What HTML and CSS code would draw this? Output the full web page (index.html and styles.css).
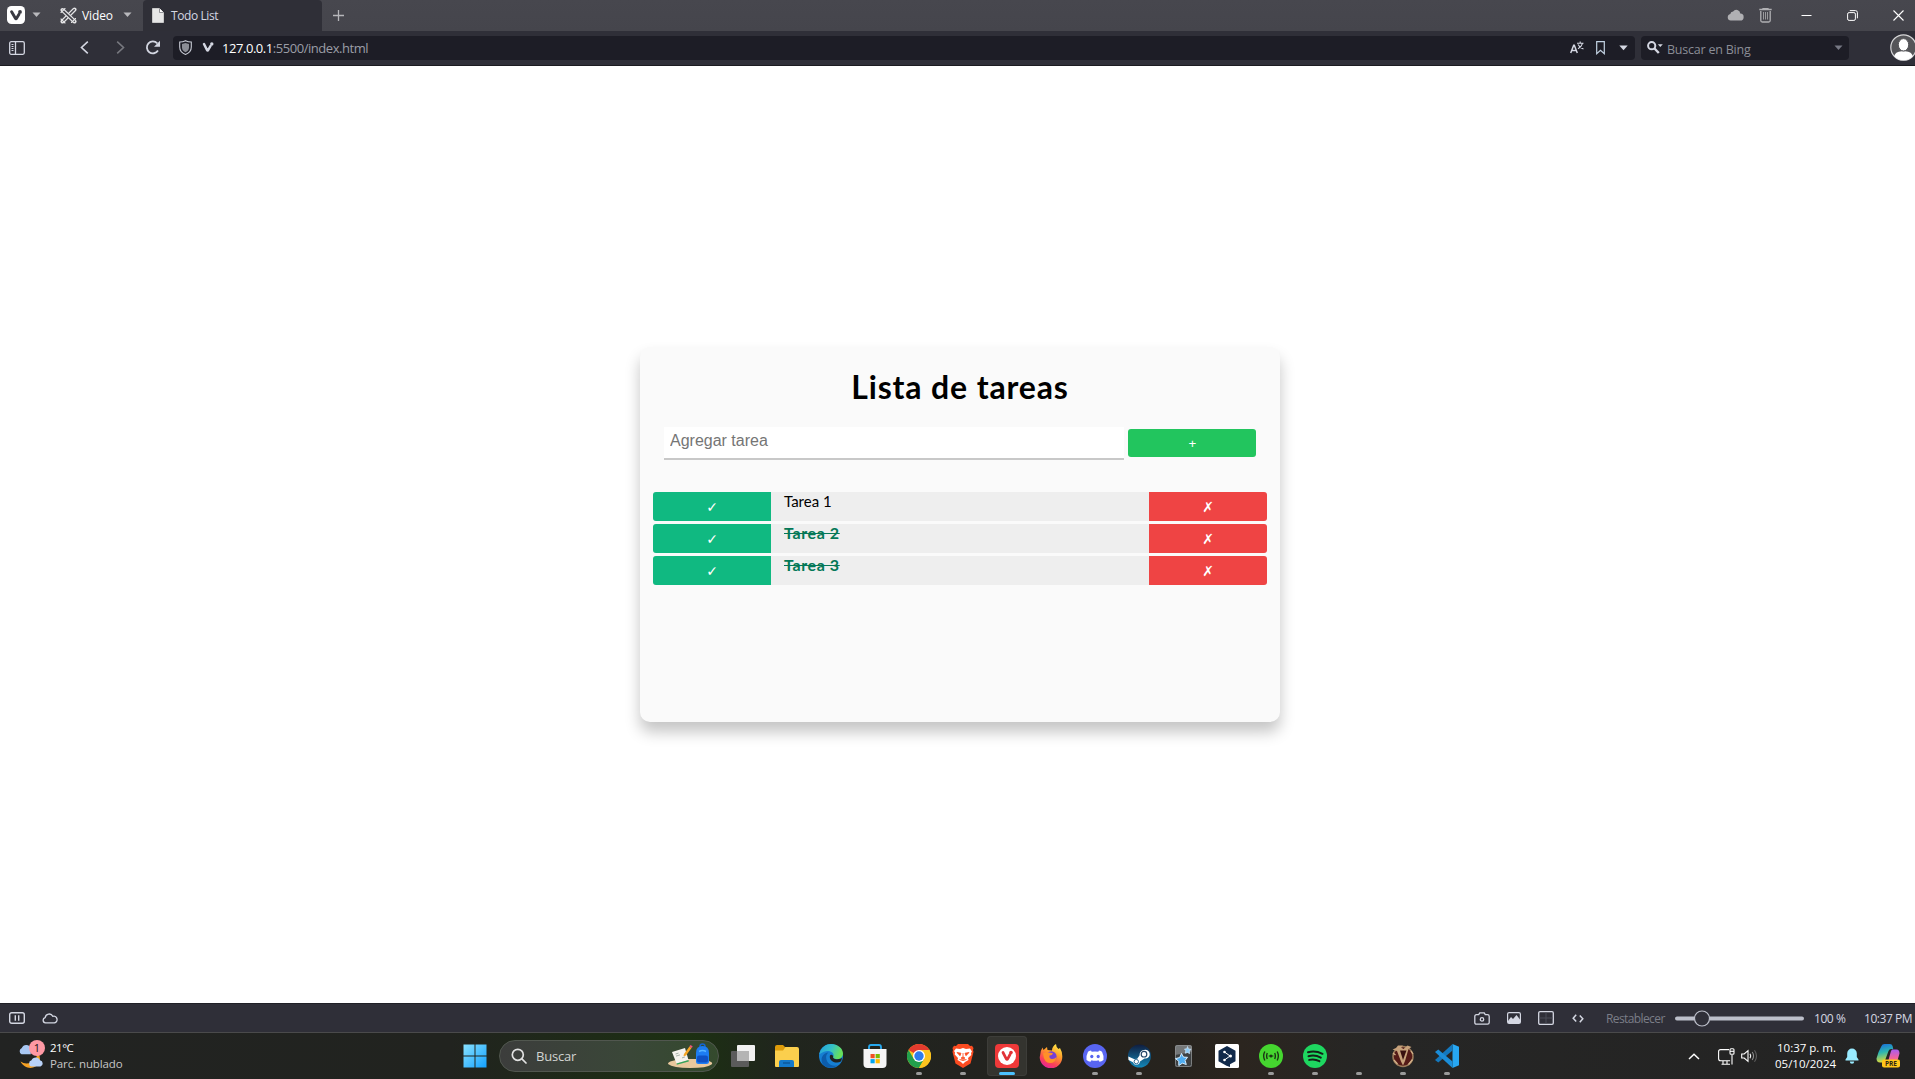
FILE: index.html
```html
<!DOCTYPE html>
<html lang="es">
<head>
<meta charset="utf-8">
<title>Todo List</title>
<link rel="stylesheet" href="styles.css">
</head>
<body>
<div class="desktop">
  <header class="tabbar">
    <div class="tabbar-left">
      <svg width="18" height="18" viewBox="0 0 18 18"><rect width="18" height="18" rx="4.5" fill="#fff"/><path d="M4.600 5.800 8.400 12.300Q9 13.300 9.600 12.300L12 8.200" fill="none" stroke="#3a3a42" stroke-width="2.900" stroke-linecap="round" stroke-linejoin="round"/><circle cx="13" cy="5.900" r="1.900" fill="#3a3a42"/></svg>
      <svg width="9" height="6" viewBox="0 0 9 6"><path d="M.5.500h8L4.500 5z" fill="#b9b9bd"/></svg>
      <svg width="17" height="17" viewBox="0 0 17 17" fill="none" stroke-linecap="round"><path d="M2.500 14.500 14.500 2.500" stroke="#e4e4e6" stroke-width="4"/><path d="M2.800 14.200 14.200 2.800" stroke="#45454c" stroke-width="1.600"/><path d="m2.500 3 12 11.500" stroke="#e4e4e6" stroke-width="4"/><path d="m2.800 3.300 11.400 10.900" stroke="#45454c" stroke-width="1.600"/><path d="m1 5.500 4-4M11.500 15.500l4-4M1 12l4 4" stroke="#e4e4e6" stroke-width="1.100"/></svg>
      <span class="workspace">Video</span>
      <svg width="9" height="6" viewBox="0 0 9 6"><path d="M.5.500h8L4.500 5z" fill="#b9b9bd"/></svg>
    </div>
    <div class="tab">
      <svg width="12" height="15" viewBox="0 0 12 15"><path d="M.5.500h7l4 4v10H.5z" fill="#e6e6e6" stroke="#c9c9c9"/><path d="M7.500.500v4h4" fill="#fff" stroke="#77777c" stroke-width=".8"/></svg>
      <span>Todo List</span>
    </div>
    <svg class="newtab" width="11" height="11" viewBox="0 0 11 11"><path d="M5.500 0v11M0 5.500h11" stroke="#b6b6ba" stroke-width="1.300"/></svg>
    <div class="winbuttons">
      <svg width="17" height="12" viewBox="0 0 17 12"><path d="M3.700 11.500a3.300 3.300 0 0 1-.4-6.500 2.800 2.800 0 0 1 2.800-2.500A4 4 0 0 1 13.300 4.500 3.500 3.500 0 0 1 13 11.500z" fill="#b0b0b3"/></svg>
      <svg width="13" height="15" viewBox="0 0 13 15" fill="none" stroke="#b0b0b3"><path d="M.3 1.500h12.400M4 1V.5h5V1M1.800 3v9.500q0 1.500 1.500 1.500h6.400q1.500 0 1.500-1.500V3" stroke-width="1.300"/><path d="M4.500 4v7.500M6.500 4v7.500M8.500 4v7.500" stroke-width=".8"/></svg>
      <svg width="11" height="11" viewBox="0 0 11 11"><path d="M.5 5.500h10" stroke="#fff"/></svg>
      <svg width="11" height="11" viewBox="0 0 11 11" fill="none" stroke="#fff"><rect x=".6" y="2.600" width="7.800" height="7.800" rx="1.500"/><path d="M2.800.6H8.400q2 0 2 2V8.300"/></svg>
      <svg width="11" height="11" viewBox="0 0 11 11"><path d="m.5.500 10 10m0-10-10 10" stroke="#fff" stroke-width="1.100"/></svg>
    </div>
  </header>

  <nav class="toolbar">
    <div class="navicons">
      <svg width="16" height="14" viewBox="0 0 16 14" fill="none" stroke="#d4d7e2"><rect x=".7" y=".7" width="14.600" height="12.600" rx="1.500" stroke-width="1.300"/><path d="M6.500.500v13" stroke-width="1.300"/><path d="M2.500 3.500h2m-2 2h2m-2 2h2m-2 2h2"/></svg>
      <svg width="9" height="13" viewBox="0 0 9 13"><path d="M7.800.7 1.500 6.500l6.300 5.800" fill="none" stroke="#d4d7e2" stroke-width="1.600"/></svg>
      <svg width="9" height="13" viewBox="0 0 9 13"><path d="m1.200.7 6.300 5.800-6.300 5.800" fill="none" stroke="#77787f" stroke-width="1.600"/></svg>
      <svg width="16" height="15" viewBox="0 0 16 15"><path d="M12.300 3.300A6 6 0 1 0 13 10.500" fill="none" stroke="#d4d7e2" stroke-width="1.800"/><path d="M15 .8v6H9z" fill="#d4d7e2"/></svg>
    </div>
    <div class="urlfield">
      <svg width="13" height="15" viewBox="0 0 13 15"><path d="M6.500.7C4.500 1.700 2.500 2 .7 2v5c0 4 2.800 6.300 5.800 7.400C9.500 13.300 12.300 11 12.300 7V2C10.500 2 8.500 1.700 6.500.7z" fill="none" stroke="#c7cad4" stroke-width="1.100"/><path d="M6.500 3 3 4v3.500c0 2.500 1.700 3.800 3.500 4.700C8.300 11.300 10 10 10 7.500V4z" fill="#8b8d95"/></svg>
      <svg width="12" height="11" viewBox="0 0 12 11"><path d="M2 2 5 8q.6 1.200 1.200 0L8.500 4" fill="none" stroke="#d4d7e2" stroke-width="2.500" stroke-linecap="round"/><circle cx="9.800" cy="2" r="1.700" fill="#d4d7e2"/></svg>
      <span class="url"><b>127.0.0.1</b><i>:5500/index.html</i></span>
      <svg width="14" height="13" viewBox="0 0 14 13" fill="none" stroke="#d4d7e2"><path d="m.7 12 3-7.700h.6L7.300 12M1.800 9.500h4.400" stroke-width="1.500"/><path d="M7 2.200h6.500M10.200.5v1.700M12.500 2.400C11.800 4.800 10.500 6.500 8 7.800M8 3.500c1 2 2.500 3.500 5.500 4.500" stroke-width="1.100"/></svg>
      <svg width="9" height="14" viewBox="0 0 9 14"><path d="M.7.700h7.600v12L4.500 9.300.7 12.700z" fill="none" stroke="#c2d2e2" stroke-width="1.200"/></svg>
      <svg width="9" height="6" viewBox="0 0 9 6"><path d="M.3.500h8.400L4.500 5.200z" fill="#d4d7e2"/></svg>
    </div>
    <div class="searchfield">
      <svg width="16" height="13" viewBox="0 0 16 13"><circle cx="4.700" cy="4.700" r="3.600" fill="none" stroke="#d4d7e2" stroke-width="2"/><path d="m7.500 7.500 4.300 4.500" stroke="#d4d7e2" stroke-width="2.400"/><path d="M10.800 3.200h5L13.300 6z" fill="#d4d7e2"/></svg>
      <span>Buscar en Bing</span>
      <svg width="9" height="6" viewBox="0 0 9 6"><path d="M.5.500h8L4.500 5z" fill="#777984"/></svg>
    </div>
    <svg class="avatar" width="27" height="27" viewBox="0 0 27 27"><circle cx="13.500" cy="13.500" r="12.700" fill="#555559" stroke="#d6d6d8" stroke-width="1.200"/><path d="M4.300 22.200c1-4.200 4.500-5 9.200-5s8.200.8 9.200 5a12.300 12.300 0 0 1-18.400 0z" fill="#fff"/><ellipse cx="13.500" cy="10.800" rx="5.200" ry="6.200" fill="#fff" stroke="#555559"/></svg>
  </nav>

  <main class="viewport">
    <section class="card">
      <h1>Lista de tareas</h1>
      <form class="newtask">
        <input type="text" placeholder="Agregar tarea">
        <button type="button">+</button>
      </form>
      <ul class="tasks">
        <li><button type="button" class="done">✓</button><span>Tarea 1</span><button type="button" class="remove">✗</button></li>
        <li class="completed"><button type="button" class="done">✓</button><span>Tarea 2</span><button type="button" class="remove">✗</button></li>
        <li class="completed"><button type="button" class="done">✓</button><span>Tarea 3</span><button type="button" class="remove">✗</button></li>
      </ul>
    </section>
  </main>

  <footer class="statusbar">
    <svg width="16" height="12" viewBox="0 0 16 12" fill="none" stroke="#d4d7e2" stroke-width="1.400"><rect x=".7" y=".7" width="14.600" height="10.600" rx="2"/><path d="M6.300 3.300v5.400M9.700 3.300v5.400"/></svg>
    <svg width="16" height="11" viewBox="0 0 16 11"><path d="M3.500 9.900a2.700 2.700 0 0 1-.3-5.300A4 4 0 0 1 10.800 3.300 3.400 3.400 0 1 1 12.500 9.900z" fill="none" stroke="#d4d7e2" stroke-width="1.300"/></svg>
    <svg width="16" height="13" viewBox="0 0 16 13" fill="none" stroke="#d4d7e2" stroke-width="1.300"><path d="M2.500 2.700h2.200L5.800.8h4.400l1.100 1.900h2.200q1.700 0 1.700 1.700v6q0 1.700-1.700 1.700h-11Q.8 12.100.8 10.400v-6q0-1.700 1.700-1.700z"/><circle cx="8" cy="7.400" r="1.700"/></svg>
    <svg width="14" height="12" viewBox="0 0 14 12"><rect x=".6" y=".6" width="12.800" height="10.800" rx="1.500" fill="none" stroke="#d4d7e2" stroke-width="1.200"/><path d="m1 9 3-4 2 2 3.500-4L13 7.500V11H1z" fill="#d4d7e2"/></svg>
    <svg width="16" height="14" viewBox="0 0 16 14" fill="none"><rect x=".7" y=".7" width="14.600" height="12.600" rx="1.300" stroke="#d4d7e2" stroke-width="1.300"/><path d="M8 1.500v11M1.500 7h13" stroke="#4b4c56"/></svg>
    <svg width="12" height="9" viewBox="0 0 12 9" fill="none" stroke="#d4d7e2" stroke-width="1.500"><path d="M4.200.8 1.200 4.200l3 3.200M7.800 1.600l3 3.200-3 3.400"/></svg>
    <span class="reset">Restablecer</span>
    <svg width="130" height="17" viewBox="0 0 130 17"><path d="M2 8.500h18M35 8.500h92" stroke="#bcbfca" stroke-width="4" stroke-linecap="round"/><circle cx="27" cy="8.500" r="7.500" fill="#2f2f38" stroke="#bcbfca" stroke-width="1.200"/></svg>
    <span class="zoom">100 %</span>
    <span class="clock">10:37 PM</span>
  </footer>

  <div class="taskbar">
    <div class="weather">
      <svg width="28" height="30" viewBox="0 0 28 30"><path d="M19.500 12a11 11 0 0 1-17 9.500c3 6 10 8 15 5s6-9 2-14.500z" fill="#f5a124"/><path d="M3.500 14.300a3.500 3.500 0 0 1 .3-6.300 4.800 4.800 0 0 1 9 .5v5.800z" fill="#a9c8f3"/><path d="M13.500 26.500a3.200 3.200 0 0 1 0-6.200 4.600 4.600 0 0 1 8.500 0 3.200 3.200 0 0 1 .5 6.200z" fill="#b9d2f7"/><circle cx="19" cy="8" r="8" fill="#ff99a4"/><text x="19" y="12" text-anchor="middle" class="badge">1</text></svg>
      <p><strong>21°C</strong><span>Parc. nublado</span></p>
    </div>
    <svg class="start" width="24" height="24" viewBox="0 0 24 24"><defs><linearGradient id="win" x1="0" y1="0" x2="24" y2="24" gradientUnits="userSpaceOnUse"><stop stop-color="#8be3ff"/><stop offset="1" stop-color="#109fff"/></linearGradient></defs><path d="M.5.500h11v11H.5zM12.500.500h11v11h-11zM.5 12.500h11v11H.5zM12.500 12.500h11v11h-11z" fill="url(#win)"/></svg>
    <div class="find">
      <svg width="16" height="16" viewBox="0 0 16 16" fill="none" stroke="#e2e2e2" stroke-width="1.700"><circle cx="6.800" cy="6.800" r="5.500"/><path d="m10.900 10.900 4.100 4.100" stroke-linecap="round"/></svg>
      <span>Buscar</span>
      <svg width="46" height="26" viewBox="0 0 46 26"><path d="M1 21q0-2 4-3l8-2h25l6 3q2 1 .5 2.500Q40 25 23 25T1 21z" fill="#e9c89d"/><path d="m5 9 13-4 3.500 12-12 3.500z" fill="#f5f3ee"/><path d="m9.500 20.500 12-3.500.3 1.500-12 3.300z" fill="#35a35c"/><path d="m8.500 11 3-.9m-2.500 3 4-1.200m2 3 3-1" stroke="#a7b2aa"/><path d="m17 11 5.500-7.500 2 1.500-5.500 7.500-2.500.7z" fill="#f5a524"/><path d="m22.300 3.300 1.400-1.400 2 1.500-1 1.500z" fill="#f0547a"/><rect x="33" y="1" width="5" height="5" rx="2.500" fill="none" stroke="#1464d1" stroke-width="1.500"/><path d="M29 18.500V10q0-7 6.500-7T42 10v8.500q0 2.500-2.500 2.500h-8Q29 21 29 18.500z" fill="#1d7df2"/><rect x="30" y="12.500" width="11" height="7" rx="2" fill="#0e51c4"/><path d="M32 8.500q3.500-2 7 0" stroke="#56b4ff" fill="none" stroke-width="1.500"/></svg>
    </div>
    <ul class="apps">
      <li><svg viewBox="0 0 24 24"><rect x="6" y="1" width="18" height="16" rx="1" fill="#f1f1f1"/><rect y="7" width="18" height="16" rx="1" fill="#5b5b5b"/><path d="M6 7h12v10H6z" fill="#b4b4b4"/></svg></li>
      <li><svg viewBox="0 0 24 24"><path d="M0 3q0-2 2-2h6l2 2h10v6H0z" fill="#dd9b0a"/><path d="M0 6.500h8L10.500 3H22q2 0 2 2v17q0 1-1 1H1q-1 0-1-1z" fill="#fbcf4d"/><path d="M4 23v-5q0-2 2-2h11q2 0 2 2v5z" fill="#1479cb"/><path d="M8 19h7" stroke="#0b5394" stroke-width="1.300"/></svg></li>
      <li><svg viewBox="0 0 24 24"><defs><linearGradient id="eg" x1="0" x2="1" y1="0" y2=".3"><stop stop-color="#219fdf"/><stop offset=".55" stop-color="#35c1c7"/><stop offset="1" stop-color="#67e05a"/></linearGradient></defs><circle cx="12" cy="12" r="12" fill="#167fd2"/><path d="M.3 10C2 3 7 0 12 0c7 0 12 4.500 12 9.500 0 3.500-2.500 5.500-5.500 5.500-4 0-5-1.600-4-3 1-4-6-8-13.700-2z" fill="url(#eg)"/><path d="M9.500 8.500C5 12 7.500 19 12 21c4 1.800 8 .5 10.300-3C17 24.500 9 25.500 4.500 21 .5 16.500 3 9 9.500 8.500z" fill="#0c5cab"/><path d="M14.300 12c-1 1.700.5 3.300 4 3.300 2.500 0 4-1 4.700-1.500-.3 2-.6 3-1.200 3.800-4 2.500-11 .2-11-4.600 0-2 1.300-3.200 3.500-1z" fill="#20221f"/></svg></li>
      <li><svg viewBox="0 0 24 24"><path d="M6 6V3q0-2 2-2h8q2 0 2 2v3" fill="none" stroke="#27a9ef" stroke-width="1.800"/><path d="M.5 5h23v15q0 4-4 4h-15q-4 0-4-4z" fill="#f5f5f5"/><path d="M7.500 10H11.700v4.200H7.500z" fill="#f25022"/><path d="M12.600 10h4.200v4.200h-4.200z" fill="#7fba00"/><path d="M7.500 15.100h4.200v4.200H7.500z" fill="#00a4ef"/><path d="M12.600 15.100h4.200v4.200h-4.200z" fill="#ffb900"/></svg></li>
      <li class="running"><svg viewBox="0 0 24 24"><circle cx="12" cy="12" r="12" fill="#fcc31e"/><path d="M12 12 1.600 6A12 12 0 0 1 22.400 6H12z" fill="#e33b2e"/><path d="M1.600 6A12 12 0 0 0 12 24l5.200-9L12 12 6.800 15z" fill="#22a04c"/><path d="M12 6h10.400A12 12 0 0 1 12 24l5.200-9z" fill="#fcc31e"/><circle cx="12" cy="12" r="6" fill="#fff"/><circle cx="12" cy="12" r="4.700" fill="#2f7ced"/></svg></li>
      <li class="running"><svg viewBox="0 0 24 24"><path d="M7 0h10l2 2 2-.2L22.500 4 22 6l.5 2-3 11.500L12 24l-7.500-4.500L1.500 8 2 6l-.5-2L3 1.800 5 2z" fill="#fb4b20"/><path d="M5 4.500 9 5l3-1 3 1 4-.5 2 3-1 1.500.3 2L17 14l.5 2-3.500 2-2 2-2-2-3.500-2L7 14l-3.300-3.500L4 8.500 3 7z" fill="#fff"/><path d="m6 8.500 4 .7-1 2.500zM18 8.500l-4 .7 1 2.500zM12 9v4l-2 1 2 1 2-1-2-1M8.500 15.500l3.500 1 3.500-1" fill="#fb4b20" stroke="#fb4b20" stroke-width=".8"/></svg></li>
      <li class="running active"><svg viewBox="0 0 24 24"><rect width="24" height="24" rx="4" fill="#ef3939"/><circle cx="12" cy="12" r="9" fill="#fff"/><path d="m8 8.500 3.300 6.300q.7 1.300 1.400 0L15 10.500" fill="none" stroke="#e23237" stroke-width="2.700" stroke-linecap="round"/><circle cx="16" cy="8.600" r="1.800" fill="#e23237"/></svg></li>
      <li><svg viewBox="0 0 24 24"><defs><linearGradient id="ff" x1=".8" y1="0" x2=".3" y2="1"><stop stop-color="#fff04a"/><stop offset=".4" stop-color="#ff9a2a"/><stop offset=".75" stop-color="#fb4058"/><stop offset="1" stop-color="#e3239d"/></linearGradient></defs><path d="M1 12Q1 7 3.500 3.500l1 2.500L8 3l.5 3 4.500.5Q13 2.500 17 0q0 3 2.500 5l1.500-1Q23.500 8 23.300 13A11.300 11.300 0 0 1 .7 13z" fill="url(#ff)"/><circle cx="12.300" cy="12.500" r="5.300" fill="#7640d6"/><path d="M4 9.500q3-2.500 6-1l4 .7q-.5 2.300-3.500 2.300-.5 3 2 3.500 3 .5 5-2-1 6-6.500 6-6 0-7-9.500z" fill="#ff9029"/></svg></li>
      <li class="running"><svg viewBox="0 0 24 24"><circle cx="12" cy="12" r="12" fill="#5865f2"/><path d="M8 6.500q-2 .3-3 1.200Q3 11.500 3.500 16q2 1.500 4 1.800l1-1.500q3.500 1 7 0l1 1.500q2-.3 4-1.800.5-4.500-1.500-8.300-1-.9-3-1.200l-.7 1.200q-3.300-.5-6.600 0z" fill="#fff"/><ellipse cx="8.800" cy="12.500" rx="1.600" ry="1.800" fill="#5865f2"/><ellipse cx="15.200" cy="12.500" rx="1.600" ry="1.800" fill="#5865f2"/></svg></li>
      <li class="running"><svg viewBox="0 0 24 24"><defs><linearGradient id="st" x2="0" y2="1"><stop stop-color="#101d3e"/><stop offset="1" stop-color="#1387b8"/></linearGradient></defs><circle cx="12.500" cy="12" r="11.500" fill="url(#st)"/><path d="m1.300 12.500 6.200 2.700q1.500-.6 2.500-.2l2.500-3.500q0-5 4.500-5.500a4.400 4.400 0 1 1 .5 8.500L13 17.500q-.5 3.300-3.700 3.300-2.600 0-3.300-2.600L1.500 16z" fill="#fff"/><circle cx="17" cy="10.200" r="2.800" fill="#fff" stroke="#244466" stroke-width="1.200"/><circle cx="9.300" cy="17.600" r="2.200" fill="none" stroke="#1b5e8b" stroke-width=".9"/></svg></li>
      <li><svg viewBox="0 0 24 24"><rect x="4" y="1" width="17" height="22" rx="2" fill="#747779"/><path d="M4 11 21 8v13q0 2-2 2H6q-2 0-2-2z" fill="#3d4042"/><rect x="4.500" y="1.500" width="16" height="21" rx="2" fill="none" stroke="#8d8f90" stroke-width=".8"/><path d="m10.500 9.500 2 3.600 4 .2-2.400 3.200 1.200 4-3.900-1.300-3.600 2.300v-4.200L4.500 14.600l4.200-1z" fill="#4eacf0" stroke="#d8eeff"/><path d="m16.500 2.500 1 2.500 2.500.2-1.600 2 .3 2.500-2.200-1.200-2.300.8.600-2.500L13.500 5l2.300-.2z" fill="#8ccaf5" stroke="#d8eeff" stroke-width=".6"/></svg></li>
      <li><svg viewBox="0 0 24 24"><rect width="24" height="24" rx="1.500" fill="#fff"/><path d="m12 2 8.500 4.800v10.400L15 20.300V23l-3.500-1.200L3.500 17.200V6.800z" fill="#10294a"/><path d="m9.500 8 5.500 4-5.500 4" fill="none" stroke="#fff"/><circle cx="9.500" cy="8" r="1.300" fill="#fff"/><circle cx="15.500" cy="12" r="1.500" fill="#fff"/><circle cx="9.500" cy="16" r="1.300" fill="#fff"/></svg></li>
      <li class="running"><svg viewBox="0 0 24 24" fill="none"><circle cx="12" cy="12" r="12" fill="#45d62f"/><path d="M8.300 9Q7 12 8.300 15M15.700 9q1.300 3 0 6M5.800 7.500Q3.500 12 5.800 16.500M18.200 7.500q2.300 4.500 0 9" stroke="#1b3514" stroke-width="1.400"/><circle cx="12" cy="12" r="1.500" fill="#1b3514"/><path d="M9.500 12h5" stroke="#1b3514" stroke-width=".8"/></svg></li>
      <li class="running"><svg viewBox="0 0 24 24" fill="none"><circle cx="12" cy="12" r="12" fill="#1ed760"/><path d="M5 8.200q7.500-2 14.500 1.600M5.500 12.200q6.500-1.800 12.300 1.400M6.200 15.900q5.300-1.400 10.200 1.300" stroke="#142018" stroke-width="2" stroke-linecap="round"/></svg></li>
      <li class="running"></li>
      <li class="running"><svg viewBox="0 0 24 24"><circle cx="12" cy="12.500" r="10" fill="#541a17" stroke="#9b7a5a" stroke-width="1.500"/><path d="M7 1.500h5l-2 2 2.500 1.500 4-3.500 4 1.500-3 2-3.500 12-2 4.500-2-4L6 7 1.500 5.500 5 4z" fill="#c7a27b"/><path d="m9 6.500 3 9.500 3.500-9.500z" fill="#38100f"/><path d="m3 16 3.500 4M17.500 20.500l4-5M2 9l2.500 2M20 7l2 3" stroke="#d4b28a" stroke-width="1.300"/></svg></li>
      <li class="running"><svg viewBox="0 0 24 24"><path d="M17.500 0 24 2.800v18.400L17.500 24z" fill="#27a7f2"/><path d="M17.500 0v6.500L3.300 18.600 0 16z" fill="#1478bd"/><path d="M17.500 24v-6.500L3.300 5.400 0 8z" fill="#1b8dd8"/></svg></li>
    </ul>
    <div class="tray">
      <svg width="12" height="7" viewBox="0 0 12 7"><path d="m1 6 5-4.700L11 6" fill="none" stroke="#fff" stroke-width="1.500"/></svg>
      <svg width="17" height="17" viewBox="0 0 17 17" fill="none" stroke="#fff" stroke-width="1.100"><path d="M11 1.600H2.600q-2 0-2 2v7.200q0 2 2 2h9.500M5 13v3M9 13v3M3.500 16.200h8.500M14 7v9.500"/><rect x="12" y=".8" width="4" height="5.500" rx="1"/><path d="M12 3.300h4"/></svg>
      <svg width="17" height="14" viewBox="0 0 17 14" fill="none" stroke="#fff" stroke-width="1.100"><path d="M.7 5v4h2.500L7 12.300V1.700L3.200 5z"/><path d="M9 4.800q1.500 2.200 0 4.400"/><path d="M11.200 3q2.800 4 0 8" stroke="#8d8d8d"/><path d="M13.500 1.200q4 5.800 0 11.600" stroke="#5f5f5f"/></svg>
      <p class="datetime"><span>10:37 p. m.</span><span>05/10/2024</span></p>
      <svg class="bell" width="14" height="16" viewBox="0 0 14 16"><path d="M7 .5a4.800 4.800 0 0 1 4.800 4.800V9l1.700 2.500v1H.5v-1L2.200 9V5.300A4.800 4.800 0 0 1 7 .5zM4.800 13.500h4.400a2.200 2.200 0 0 1-4.400 0z" fill="#99ebff"/></svg>
      <svg class="copilot" width="24" height="24" viewBox="0 0 24 24"><defs><linearGradient id="c1" x2=".2" y2="1"><stop stop-color="#1769e0"/><stop offset=".5" stop-color="#2db6b0"/><stop offset="1" stop-color="#d8d83a"/></linearGradient><linearGradient id="c2" x2="0" y2="1"><stop stop-color="#a95df0"/><stop offset=".5" stop-color="#f0629d"/><stop offset="1" stop-color="#f79a52"/></linearGradient></defs><path d="M5.500 2q.7-2 3-2h5.500q2 0 2.600 2l.6 3h-2q-2 0-2.700 2L9 16.500q-.5 2-3 2H4q-3.500 0-3.500-4Q2 8 5.500 2z" fill="url(#c1)"/><path d="M16 5.500h4.500q3 0 3 4L21 18q-1 4-4 4H9q2-1 2.600-3L15 7z" fill="url(#c2)"/><rect x="6" y="15.500" width="18" height="8" rx="2" fill="#ffc61a"/><text x="15" y="22.200" text-anchor="middle" class="pre">PRE</text></svg>
    </div>
  </div>
</div>
</body>
</html>
```
FILE: styles.css
```css
* { box-sizing: border-box; }

body {
  margin: 0;
  width: 100vw;
  height: 100vh;
  overflow: hidden;
  font-family: "Open Sans", "Noto Sans", sans-serif;
  font-size: 12px;
  color: #d4d7e2;
}

svg { display: block; }
p, h1, ul { margin: 0; padding: 0; }
ul { list-style: none; }
button, input { border: 0; padding: 0; margin: 0; }

.desktop {
  width: 1920px;
  height: 1079px;
  display: grid;
  grid-template-rows: 31px 35px 937px 30px 46px;
}

/* Tab strip */
.tabbar {
  display: flex;
  align-items: center;
  background: linear-gradient(#47474e, #45454c);
}
.tabbar-left {
  display: grid;
  grid-template-columns: 25px 28px 22px 41px 20px;
  align-items: center;
  padding: 0 0 1px 7px;
  width: 143px;
}
.workspace { color: #fff; font-size: 12px; letter-spacing: -0.1px; }
.tab {
  width: 179px;
  height: 31px;
  border-radius: 4px 4px 0 0;
  background: #2f2f37;
  display: flex;
  align-items: center;
  gap: 7px;
  padding-left: 9px;
  font-size: 12px;
  letter-spacing: -0.4px;
}
.newtab { margin-left: 11px; }
.winbuttons {
  display: grid;
  grid-template-columns: 32px 42px 46px 46px 27px;
  align-items: center;
  margin-left: auto;
}
.winbuttons svg:first-child { margin-bottom: 1px; }

/* Address bar */
.toolbar {
  display: flex;
  align-items: center;
  padding-bottom: 1px;
  background: #2f2f38;
  border-bottom: 1px solid #1b1b20;
}
.navicons {
  display: grid;
  grid-template-columns: 71px 36px 29px 28px;
  align-items: center;
  padding-left: 9px;
  width: 173px;
}
.urlfield, .searchfield {
  height: 24px;
  border-radius: 4px;
  background: #1d1d26;
  display: grid;
  align-items: center;
}
.urlfield {
  width: 1462px;
  grid-template-columns: 23px 20px 1348px 26px 23px 9px;
  padding-left: 6px;
}
.url { padding-top: 1px; font-size: 13px; letter-spacing: -0.45px; color: #9b9da6; }
.url b { font-weight: 400; color: #fff; }
.url i { font-style: normal; }
.searchfield {
  width: 208px;
  margin-left: 6px;
  padding-left: 6px;
  grid-template-columns: 20px 167px 9px;
  font-size: 12.5px;
  letter-spacing: -0.22px;
  color: #8b8d96;
}
.searchfield span { padding-top: 3px; }
.avatar { margin-left: 41px; }

/* Page */
.viewport {
  background: #fff;
  display: flex;
  align-items: center;
  justify-content: center;
}
.card {
  width: 640px;
  height: 375px;
  border-radius: 10px;
  background: #fafafa;
  box-shadow: 0 10px 15px rgba(0, 0, 0, .23);
  font-family: Lato, sans-serif;
  color: #000;
}
.card h1 {
  padding-top: 21px;
  height: 80px;
  text-align: center;
  font-size: 32px;
  line-height: 38px;
  font-weight: 700;
  letter-spacing: .85px;
}
.newtask {
  display: flex;
  align-items: flex-start;
  gap: 4px;
  padding: 0 24px;
}
.newtask input {
  width: 460px;
  height: 33px;
  padding: 0 6px 3px;
  background: #fff;
  border-bottom: 2px solid #c8c8c8;
  font: 16px "Liberation Sans", sans-serif;
}
.newtask input::placeholder { color: #757575; }
.newtask button {
  width: 128px;
  height: 28px;
  margin-top: 2px;
  padding-left: 1px;
  border-radius: 3px;
  background: #22c55e;
  color: #fff;
  font: 13.33px "Liberation Sans", sans-serif;
}
.tasks {
  display: grid;
  gap: 3px;
  padding: 32px 13px 0;
}
.tasks li {
  display: grid;
  grid-template-columns: 118px 378px 118px;
  height: 29px;
  background: #eee;
  border-radius: 3px;
  font-size: 15px;
  line-height: 18px;
}
.tasks span { padding-left: 13px; justify-self: start; }
.tasks button {
  padding-top: 1px;
  color: #fff;
  font: bold 14px "DejaVu Sans", sans-serif;
}
.done { background: #10b981; border-radius: 3px 0 0 3px; }
.remove { background: #ef4444; border-radius: 0 3px 3px 0; }
.completed span {
  color: #047857;
  font-size: 16px;
  font-weight: 700;
  letter-spacing: .6px;
  text-decoration: line-through;
}

/* Status bar */
.statusbar {
  display: grid;
  grid-template-columns: 33px 1432px 33px 31px 34px 34px 69px 139px 50px 56px;
  align-items: center;
  padding-left: 9px;
  background: #2f2f38;
  border-top: 1px solid #202027;
  border-bottom: 1px solid #4a4a4b;
  font-size: 12px;
  letter-spacing: -0.6px;
}
.statusbar .zoom, .statusbar .clock { letter-spacing: -0.45px; }
.reset { color: #7b7d87; }

/* Taskbar */
.taskbar {
  display: flex;
  align-items: center;
  background: linear-gradient(90deg, #222322 0, #21231f 450px, #1c3012 690px, #20251d 780px, #22231f 960px, #27231e 1180px, #2b251f 1240px, #262625 1370px, #232323 1920px);
  color: #fff;
}
.weather {
  display: flex;
  gap: 4px;
  width: 463px;
  padding-left: 18px;
}
.weather p { display: grid; line-height: 16px; font-size: 11.5px; }
.weather strong { font-weight: 400; letter-spacing: -0.5px; }
.weather p span { color: #c6c6c6; letter-spacing: -0.1px; }
.badge { font: 11px "Open Sans", sans-serif; fill: #201214; }
.find {
  display: grid;
  grid-template-columns: 25px 131px 46px;
  align-items: center;
  width: 220px;
  height: 32px;
  margin-left: 12px;
  padding-left: 11px;
  border: 1px solid #51574f;
  border-radius: 16px;
  background: linear-gradient(90deg, #3c3d3c, #3a4738 60%, #344a2d);
  font-size: 13px;
  letter-spacing: -0.2px;
  color: #d2d4d2;
}
.apps { display: flex; gap: 4px; margin-left: 4px; }
.apps li {
  position: relative;
  width: 40px;
  height: 40px;
  padding: 8px;
  border-radius: 4px;
}
.apps svg { width: 24px; height: 24px; }
.running::after {
  content: "";
  position: absolute;
  left: 17px;
  bottom: 1px;
  width: 6px;
  height: 3px;
  border-radius: 2px;
  background: #9a9a9a;
}
.active { background: #34342f; box-shadow: inset 0 0 0 1px #3d3d39; }
.active::after { left: 12px; width: 16px; background: #4cc2ff; }
.tray {
  display: grid;
  grid-template-columns: 30px 23px 34px 61px 8px 32px 24px;
  align-items: center;
  margin-left: auto;
  padding-right: 20px;
}
.bell { grid-column: 5; margin-left: 9px; }
.copilot { grid-column: 7; }
.datetime {
  display: grid;
  line-height: 16px;
  font-size: 11.5px;
  text-align: right;
  white-space: nowrap;
}
.pre { font: 700 6.5px "Open Sans", sans-serif; fill: #2c2415; }
```
